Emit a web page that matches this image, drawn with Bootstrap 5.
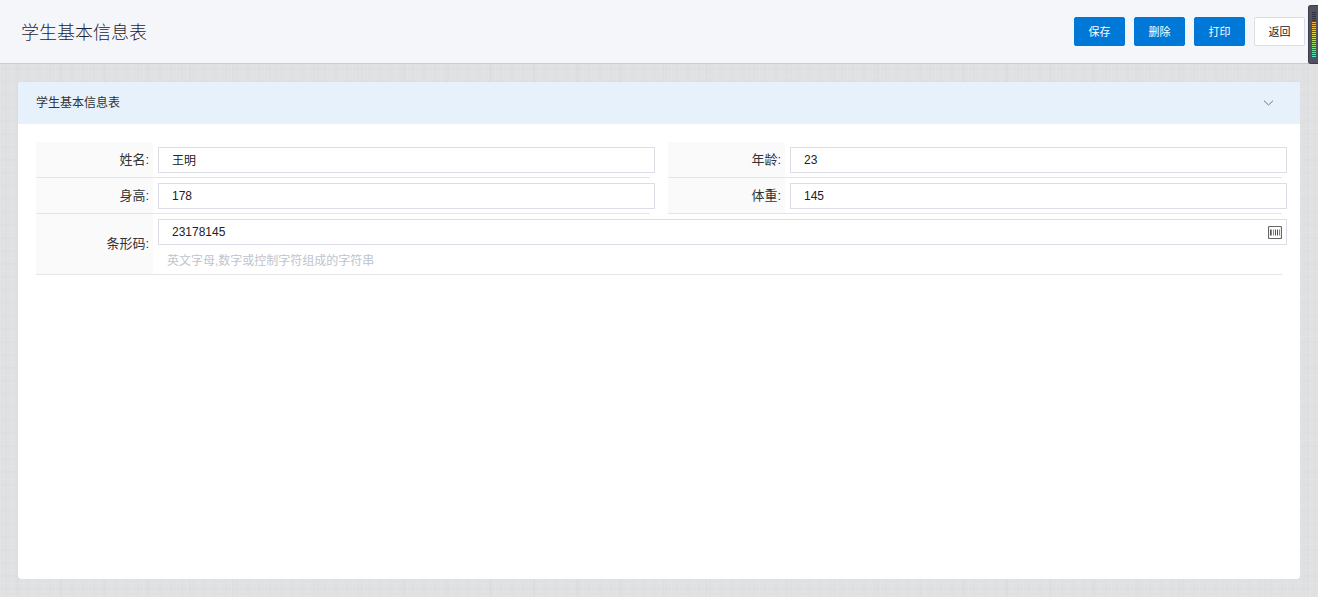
<!DOCTYPE html>
<html lang="zh-CN">
<head>
<meta charset="utf-8">
<meta name="viewport" content="width=device-width, initial-scale=1">
<title>学生基本信息表</title>
<link href="https://cdn.jsdelivr.net/npm/bootstrap@5.3.0/dist/css/bootstrap.min.css" rel="stylesheet">
<style>
  body {
    font-family: "Liberation Sans", "Noto Sans CJK SC", sans-serif;
    font-size: 13px;
    line-height: 20px;
    color: #333;
    background-color: #dfe1e3;
    /* woven linen texture */
    background-image:
      repeating-linear-gradient(90deg, rgba(255,255,255,.08) 0 1px, transparent 1px 5px, rgba(0,0,0,.008) 5px 7px, transparent 7px 11px),
      repeating-linear-gradient(0deg, rgba(255,255,255,.08) 0 1px, transparent 1px 7px, rgba(0,0,0,.008) 7px 9px, transparent 9px 13px),
      repeating-linear-gradient(90deg, transparent 0 17px, rgba(0,0,0,.01) 17px 19px, transparent 19px 43px);
  }
  .page-bar { background: #f4f6fa; border-bottom: 1px solid #c9cbd0; height: 64px; padding: 0 13px 0 21px; }
  .page-bar h1 { font-size: 18px; line-height: 27px; padding-top: 3px; font-weight: 300; color: #1f2430; }
  .tools { gap: 9px; }
  .tools .btn {
    --bs-btn-font-size: 11px; --bs-btn-padding-x: 0; --bs-btn-padding-y: 0; --bs-btn-border-radius: 2px;
    width: 51px; height: 29px; line-height: 29px;
  }
  .tools .btn-primary { --bs-btn-bg: #0078d7; --bs-btn-border-color: #0078d7; }
  .tools .btn-back { --bs-btn-bg: #fff; --bs-btn-color: #222; --bs-btn-border-color: #dcdde6; }
  .panel { margin: 18px; border: 0; border-radius: 4px; color: inherit; }
  .panel-top { background: #e6f1fb; height: 42px; padding: 0 26px 0 18px; }
  .panel-top h2 { font-size: 12px; line-height: 18px; font-weight: 400; }
  .panel-body { padding: 18px; }
  .fields { --bs-gutter-x: 18px; }
  .field { border-bottom: 1px solid #e5e5e5; min-height: 36px; }
  .field-name { width: 117px; padding-right: 4px; background: #fafafa; flex: none; }
  /* inputs run slightly past the row rule */
  .field-value { padding-top: 5px; margin: 0 -5px 0 5px; min-width: 0; }
  .field-value .form-control {
    height: 26px; padding: 0 13px; font-size: 12px; line-height: 24px;
    border: 1px solid #dcdde6; border-radius: 0; color: #222;
  }
  .field-value .han { padding-bottom: 2px; }
  .hint { font-size: 12px; color: #c0c4cc; padding: 6px 0 3px 9px; }
  .scan { right: 5px; top: 50%; transform: translateY(-50%); line-height: 0; }
  .meter { right: 0; top: 5px; width: 10px; height: 59px; padding: 6px 2px 5px 3px; background: #50535f; border: solid #3b3d48; border-width: 1px 0 1px 1px; border-radius: 3px 0 0 3px; z-index: 5; }
  .meter-bars {
    width: 4px; height: 45px;
    background:
      repeating-linear-gradient(transparent 0 1px, #50535f 1px 2px),
      linear-gradient(#30323c 0 9px, #f7a13d 9px, #e3d84b 22px, #9fdc6c 32px, #45e6d0);
  }
</style>
</head>
<body class="d-flex flex-column min-vh-100">
  <header class="page-bar d-flex align-items-center justify-content-between">
    <h1 class="m-0">学生基本信息表</h1>
    <div class="tools d-flex">
      <button type="button" class="btn btn-primary">保存</button>
      <button type="button" class="btn btn-primary">删除</button>
      <button type="button" class="btn btn-primary">打印</button>
      <button type="button" class="btn btn-back">返回</button>
    </div>
  </header>

  <div class="meter position-fixed" aria-hidden="true"><div class="meter-bars"></div></div>

  <main class="panel card flex-grow-1">
    <div class="panel-top d-flex align-items-center justify-content-between">
      <h2 class="m-0">学生基本信息表</h2>
      <svg width="11" height="6" viewBox="0 0 11 6" fill="none" stroke="#777" aria-hidden="true"><path d="M1 .7L5.5 5L10 .7"/></svg>
    </div>
    <form class="panel-body">
      <div class="row fields">
        <div class="col-6"><div class="field d-flex">
          <label class="field-name d-flex align-items-center justify-content-end" for="name">姓名:</label>
          <div class="field-value flex-grow-1"><input class="form-control han" id="name" value="王明"></div>
        </div></div>
        <div class="col-6"><div class="field d-flex">
          <label class="field-name d-flex align-items-center justify-content-end" for="age">年龄:</label>
          <div class="field-value flex-grow-1"><input class="form-control" id="age" value="23"></div>
        </div></div>
        <div class="col-6"><div class="field d-flex">
          <label class="field-name d-flex align-items-center justify-content-end" for="height">身高:</label>
          <div class="field-value flex-grow-1"><input class="form-control" id="height" value="178"></div>
        </div></div>
        <div class="col-6"><div class="field d-flex">
          <label class="field-name d-flex align-items-center justify-content-end" for="weight">体重:</label>
          <div class="field-value flex-grow-1"><input class="form-control" id="weight" value="145"></div>
        </div></div>
        <div class="col-12"><div class="field d-flex">
          <label class="field-name d-flex align-items-center justify-content-end" for="barcode">条形码:</label>
          <div class="field-value flex-grow-1">
            <div class="position-relative">
              <input class="form-control" id="barcode" value="23178145" aria-describedby="barcode-hint">
              <span class="scan position-absolute">
                <svg width="14" height="14" viewBox="0 0 14 14" fill="none" aria-hidden="true">
                  <rect x=".5" y="1.5" width="13" height="12" rx="1" fill="#fff" stroke="#666" stroke-width="1.2"/>
                  <path d="M2.5 4.5V10.5M7.5 4.5V10.5M9.5 4.5V10.5" stroke="#555"/>
                  <path d="M3.5 4.5V10.5M5.5 4.5V10.5M11.5 4.5V10.5" stroke="#888"/>
                </svg>
              </span>
            </div>
            <div class="hint" id="barcode-hint">英文字母,数字或控制字符组成的字符串</div>
          </div>
        </div></div>
      </div>
    </form>
  </main>
<script src="https://cdn.jsdelivr.net/npm/bootstrap@5.3.0/dist/js/bootstrap.bundle.min.js"></script>
</body>
</html>
